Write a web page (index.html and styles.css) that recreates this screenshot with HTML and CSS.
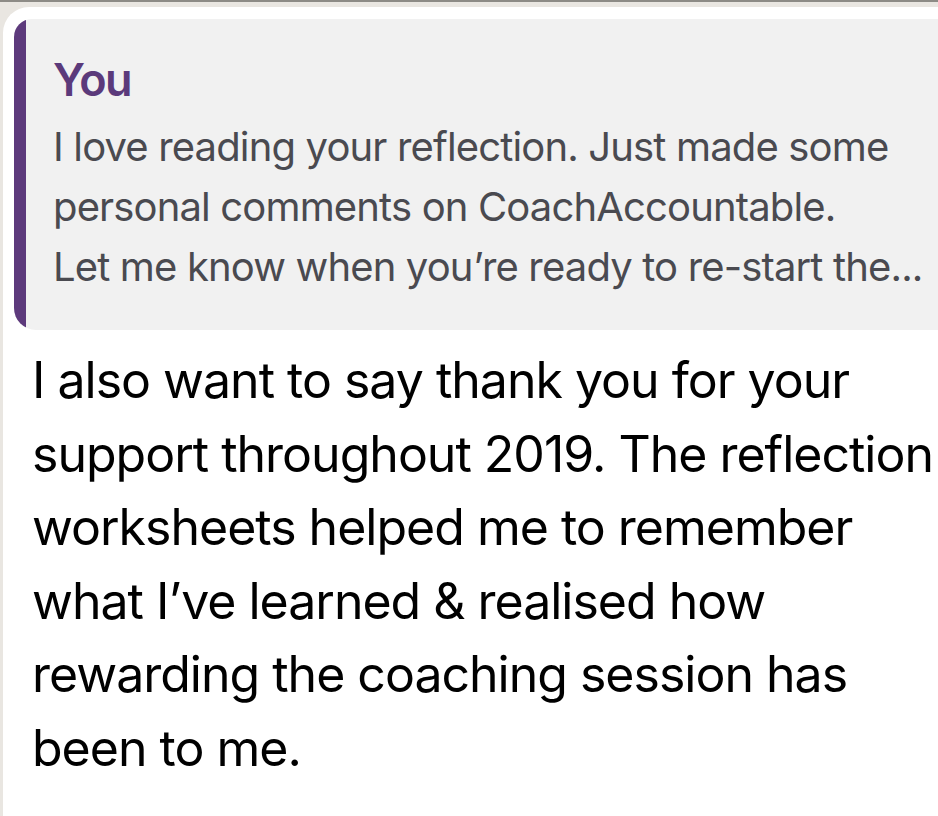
FILE: index.html
```html
<!DOCTYPE html>
<html lang="en">
<head>
<meta charset="utf-8">
<title>Message</title>
<link rel="stylesheet" href="styles.css">
</head>
<body>
<div class="topline"></div>
<div class="bubble">
  <div class="quote">
    <div class="quote-bar"></div>
    <div class="quote-body">
      <div class="quote-name">You</div>
      <div class="quote-text">I love reading your reflection. Just made some<br>personal comments on CoachAccountable.<br>Let me know when you’re ready to re-start the...</div>
    </div>
  </div>
  <div class="message">I also want to say thank you for your<br>support throughout 2019. The reflection<br>worksheets helped me to remember<br>what I’ve learned &amp; realised how<br>rewarding the coaching session has<br>been to me.</div>
</div>
</body>
</html>
```
FILE: styles.css
```css
html, body {
  margin: 0;
  padding: 0;
}
body {
  background: #e9e6e1;
  width: 938px;
  height: 816px;
  overflow: hidden;
  font-family: Inter, "Noto Sans", sans-serif;
}
.topline {
  height: 2px;
  background: #8d8b86;
}
.bubble {
  margin: 5px 0 0 3px;
  width: 935px;
  height: 809px;
  overflow: hidden;
  background: #ffffff;
  border-top-left-radius: 26px;
  padding: 12px 0 0 11px;
  box-sizing: border-box;
}
.quote {
  display: flex;
  height: 311px;
  background: #f1f1f1;
  border-radius: 18px 0 0 22px;
  overflow: hidden;
}
.quote-bar {
  width: 12px;
  flex: none;
  background: #5d3a7c;
}
.quote-body {
  padding: 33px 0 0 27px;
}
.quote-name {
  font-size: 45px;
  line-height: 56px;
  font-weight: 600;
  letter-spacing: -1.5px;
  color: #5b3a7b;
  margin-bottom: 9px;
}
.quote-text {
  font-size: 40px;
  line-height: 60px;
  letter-spacing: -0.85px;
  color: #4a4a50;
  white-space: nowrap;
}
.message {
  margin-top: 14px;
  padding-left: 18px;
  font-size: 50px;
  line-height: 73.5px;
  letter-spacing: -1px;
  color: #000000;
  white-space: nowrap;
}
```
